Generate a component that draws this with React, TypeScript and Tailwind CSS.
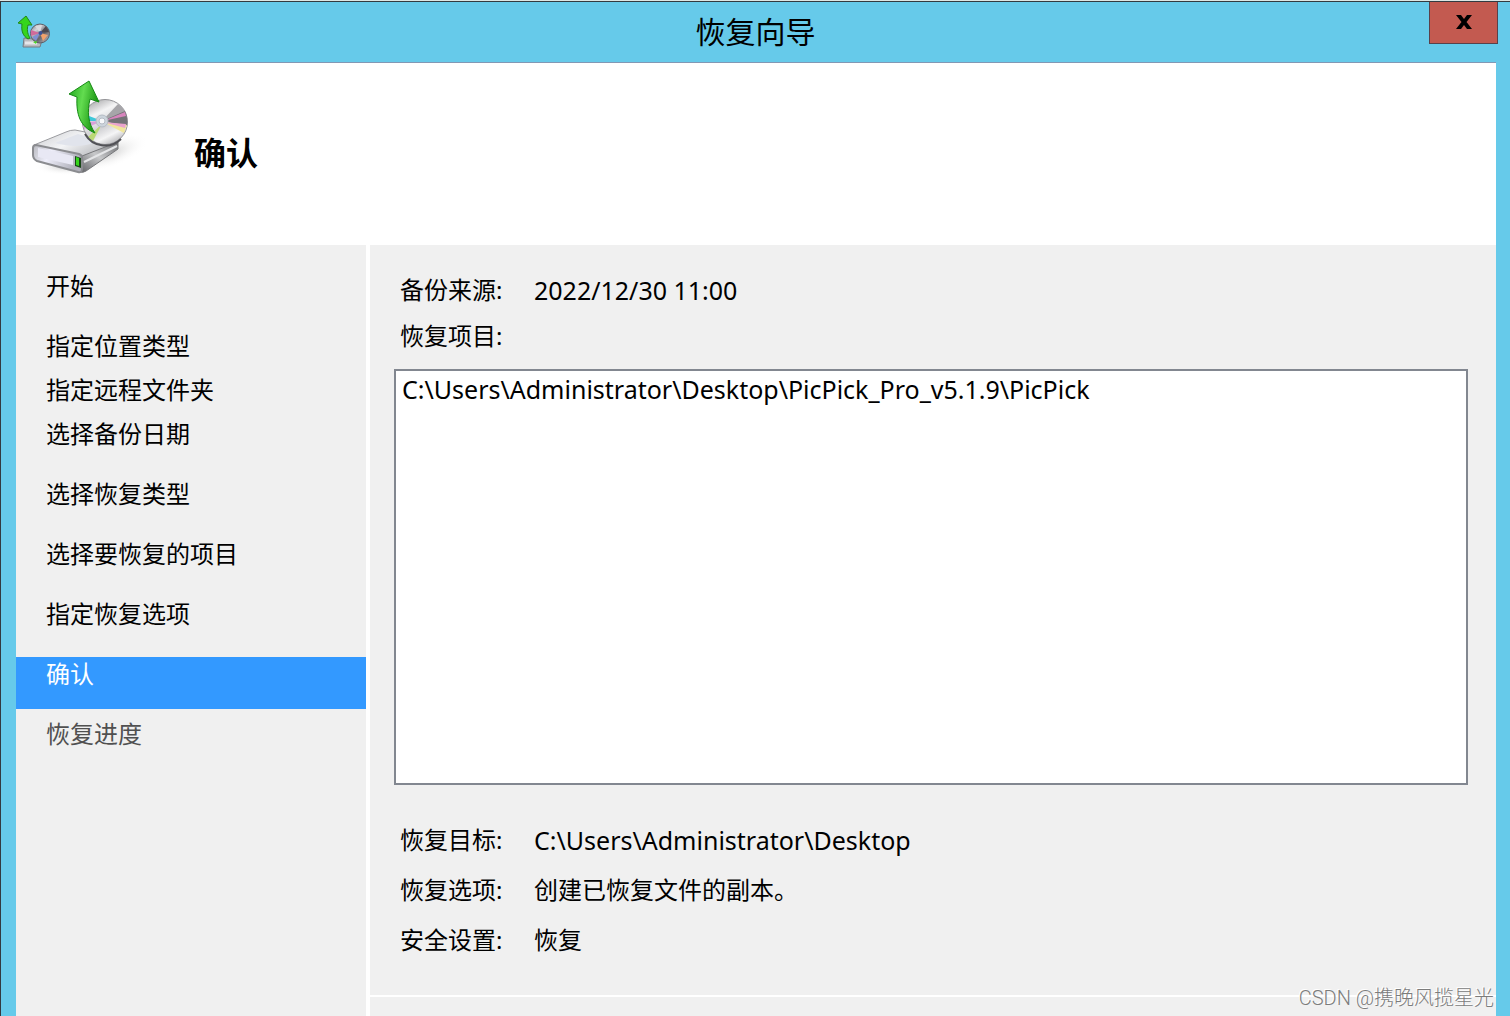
import clsx from "clsx";

interface Step {
  label: string;
  compact?: boolean;
  pending?: boolean;
}

const steps: Step[] = [
  { label: "开始" },
  { label: "指定位置类型", compact: true },
  { label: "指定远程文件夹", compact: true },
  { label: "选择备份日期" },
  { label: "选择恢复类型" },
  { label: "选择要恢复的项目" },
  { label: "指定恢复选项" },
  { label: "确认" },
  { label: "恢复进度", pending: true },
];

const currentStep = "确认";

const summary = [
  { label: "恢复目标:", value: "C:\\Users\\Administrator\\Desktop", latin: true },
  { label: "恢复选项:", value: "创建已恢复文件的副本。" },
  { label: "安全设置:", value: "恢复" },
];

function SmallRestoreIcon() {
  return (
    <svg width="34" height="34" viewBox="17 14 34 34" aria-hidden="true">
      <defs>
        <linearGradient id="sDisc" x1="0" y1="0" x2="1" y2="1">
          <stop offset="0" stopColor="#77777f" />
          <stop offset="0.3" stopColor="#d2d2d6" />
          <stop offset="0.6" stopColor="#66646b" />
          <stop offset="1" stopColor="#c8c8cc" />
        </linearGradient>
      </defs>
      <path d="M24 38 L42 40 L40 47 L23 47 Z" fill="#b9bbc0" stroke="#777b82" />
      <path d="M25 43 H37" stroke="#e6e6ea" strokeWidth="3" />
      <circle cx="40" cy="33.500" r="9.500" fill="url(#sDisc)" stroke="#5e5e66" />
      <path d="M40 33 L31 30 L31 36 Z" fill="#d16a9b" />
      <path d="M40 33 L48 35 L43 41 Z" fill="#f0a26c" />
      <path d="M40 33 L46 26 L49 32 Z" fill="#4b4850" />
      <path d="M40 33 L32 37 L36 41 Z" fill="#7f8fd4" />
      <path d="M40 33 L35 26 L42 25 Z" fill="#d9d9de" />
      <circle cx="40.500" cy="33" r="2" fill="#3c5399" />
      <path d="M33 42 L37 41 L36 44 Z" fill="#4dde23" />
      <path
        d="M26 16 L18 23 L22 24 C21 31 23 36 28 39 L30 38 C27 33 27 29 28 25 L32 25 Z"
        fill="#35d51c"
        stroke="#23851b"
      />
    </svg>
  );
}

function RestoreIcon() {
  return (
    <svg width="124" height="104" viewBox="28 75 124 104" aria-hidden="true">
      <defs>
        <linearGradient id="arrow" x1="0" y1="0" x2="1" y2="0.3">
          <stop offset="0" stopColor="#1da51b" />
          <stop offset="0.5" stopColor="#63dc50" />
          <stop offset="1" stopColor="#17930f" />
        </linearGradient>
        <linearGradient id="disc" x1="0.2" y1="0" x2="0.7" y2="1">
          <stop offset="0" stopColor="#a4a4a6" />
          <stop offset="0.3" stopColor="#f4f4f5" />
          <stop offset="0.6" stopColor="#d2d2d5" />
          <stop offset="0.8" stopColor="#f5f5f6" />
          <stop offset="1" stopColor="#b5b5b8" />
        </linearGradient>
        <linearGradient id="lid" x1="0" y1="0" x2="1" y2="0.6">
          <stop offset="0" stopColor="#c9cacd" />
          <stop offset="0.5" stopColor="#f3f4f6" />
          <stop offset="1" stopColor="#b4b5b9" />
        </linearGradient>
        <linearGradient id="front" x1="0" y1="0" x2="1" y2="0.3">
          <stop offset="0" stopColor="#b9bac0" />
          <stop offset="0.4" stopColor="#eeeefa" />
          <stop offset="1" stopColor="#b0b0ba" />
        </linearGradient>
        <linearGradient id="side" x1="0" y1="1" x2="1" y2="0">
          <stop offset="0" stopColor="#606165" />
          <stop offset="0.5" stopColor="#c7c8ca" />
          <stop offset="1" stopColor="#6d6e71" />
        </linearGradient>
        <radialGradient id="shade">
          <stop offset="0" stopColor="#b8b8b8" stopOpacity="0.7" />
          <stop offset="1" stopColor="#ffffff" stopOpacity="0" />
        </radialGradient>
      </defs>
      <ellipse cx="108" cy="153" rx="42" ry="15" fill="url(#shade)" transform="rotate(-18 108 153)" />
      <ellipse cx="66" cy="167" rx="32" ry="8" fill="url(#shade)" />
      {/* Drive body */}
      <path d="M34 145 L66 132 Q70 130 75 130 L116 138 Q119 140 117 143 L84 158 Z" fill="url(#lid)" stroke="#9b9ca0" />
      <path d="M55 143 L78 134 L98 140 Q84 150 55 143 Z" fill="#e1e4ec" />
      <path d="M82 156 L118 142 V149 L86 171 Q83 173 80 172 Z" fill="url(#side)" stroke="#77787b" />
      <path d="M84 162 L117 146" stroke="#e4e5e7" strokeWidth="2" />
      <path d="M36 145 L79 154 Q82 155 82 158 V169 Q82 173 78 172 L37 161 Q33 159 33 155 V148 Q33 145 36 145 Z" fill="url(#front)" stroke="#8b8c90" strokeWidth="2" />
      <path d="M38 148 L73 156 V165 L38 157 Z" fill="#e8e8f4" />
      <path d="M75 156 L81 158 V168 L75 166 Z" fill="#174716" />
      <path d="M76 157 L79 158 V166 L76 165 Z" fill="#35d51c" />
      {/* Disc */}
      <circle cx="105" cy="122" r="22.500" fill="url(#disc)" stroke="#929296" />
      <path d="M102 121 L118 104 Q124 108 126 114 Z" fill="#a6a5a9" />
      <path d="M102 121 L125 111 Q128 117 127 126 Z" fill="#747377" />
      <path d="M103 121 L125 112 L126 116 Z" fill="#d785bd" />
      <path d="M103 122 L127 125 L124 133 Z" fill="#f0e69c" />
      <path d="M103 122 L126 124 L125 128 Z" fill="#eaa4ce" />
      <path d="M102 121 L84 114 L83 121 Z" fill="#3fc8d9" />
      <path d="M102 121 L83 122 L84 129 Z" fill="#d9a0da" />
      <path d="M88 137 L102 124 L93 141 Z" fill="#b9d976" />
      <path d="M85 134 A23 23 0 0 0 121 139" fill="none" stroke="#525257" strokeWidth="2" />
      <circle cx="102" cy="121" r="6" fill="#ccd4dc" stroke="#b5bcc5" />
      <circle cx="102" cy="121" r="3" fill="#f7f8fa" stroke="#b5bcc5" />
      {/* Arrow */}
      <path
        d="M89 81 L69 94 L77 97 C76 114 80 127 95 133 C88 123 87 112 90 99 L99 102 Z"
        fill="url(#arrow)"
        stroke="#168a15"
      />
    </svg>
  );
}

export default function App() {
  return (
    <div className="relative flex min-h-screen flex-col border-t border-[#dce6e4] bg-[#66caea] font-['Noto_Sans','Noto_Sans_CJK_SC',sans-serif] text-2xl leading-9 text-black">
      <div className="flex flex-1 flex-col border-t border-l border-[#333a40]">
        {/* Title bar */}
        <header className="grid h-15 grid-cols-[1fr_auto_1fr] items-start px-3">
          <div className="pt-3 pl-1">
            <SmallRestoreIcon />
          </div>
          <h1 className="pt-3 text-[30px] leading-9">恢复向导</h1>
          <button
            type="button"
            aria-label="关闭"
            className="flex h-[42px] w-[69px] justify-center justify-self-end border border-t-0 border-[#59414a] bg-[#c35a50] pt-3"
          >
            <svg width="18" height="16" viewBox="0 0 18 16" aria-hidden="true">
              <path d="M1 1 H6 L9 5 L12 1 H17 L11.500 8 L17 15 H12 L9 11 L6 15 H1 L6.500 8 Z" fill="#000" />
            </svg>
          </button>
        </header>

        <div className="mr-3.5 ml-[15px] flex flex-1 flex-col border-t border-[#8298b4] bg-white">
          <div className="flex h-[182px] items-start pt-3 pl-3">
            <RestoreIcon />
            <h2 className="pt-[58px] pl-[42px] text-[32px] leading-10 font-bold">确认</h2>
          </div>

          <div className="flex flex-1 gap-1">
            {/* Steps */}
            <nav className="w-[350px] shrink-0 bg-[#f0f0f0] pt-6">
              <ol>
                {steps.map((step) => (
                  <li key={step.label} className="mb-2">
                    <button
                      type="button"
                      disabled={step.pending}
                      aria-current={step.label === currentStep ? "step" : undefined}
                      className={clsx(
                        "flex w-full items-start pl-[30px] text-left leading-[34px]",
                        step.compact ? "h-9" : "h-13",
                        step.label === currentStep && "bg-[#3399ff] text-white",
                        step.pending && "text-[#505050]"
                      )}
                    >
                      {step.label}
                    </button>
                  </li>
                ))}
              </ol>
            </nav>

            {/* Confirmation */}
            <main className="flex min-w-0 flex-1 flex-col gap-0.5">
              <section className="h-[750px] bg-[#f0f0f0] pt-[27px] pr-7 pl-6">
                <div className="flex pl-1.5">
                  <span className="w-[134px]">备份来源:</span>
                  <span className="text-[25px]">2022/12/30 11:00</span>
                </div>
                <label htmlFor="items" className="mt-2.5 block pl-1.5">
                  恢复项目:
                </label>
                <textarea
                  id="items"
                  readOnly
                  value={"C:\\Users\\Administrator\\Desktop\\PicPick_Pro_v5.1.9\\PicPick"}
                  className="mt-[15px] block h-[416px] w-full resize-none border-2 border-[#828790] bg-white px-1.5 text-[25px] outline-none"
                />
                <dl className="mt-[37px] flex flex-col gap-3.5 pl-1.5">
                  {summary.map((row) => (
                    <div key={row.label} className="flex">
                      <dt className="w-[134px]">{row.label}</dt>
                      <dd className={clsx(row.latin && "text-[25px]")}>{row.value}</dd>
                    </div>
                  ))}
                </dl>
              </section>
              <div className="flex-1 bg-[#f0f0f0]" />
            </main>
          </div>
        </div>
      </div>

      <span className="absolute right-4 bottom-1 font-['Roboto','Noto_Sans_CJK_SC',sans-serif] text-xl leading-7 font-light text-[#7c7c7c] [text-shadow:-1px_-1px_0_#fff]">
        CSDN @携晚风揽星光
      </span>
    </div>
  );
}
